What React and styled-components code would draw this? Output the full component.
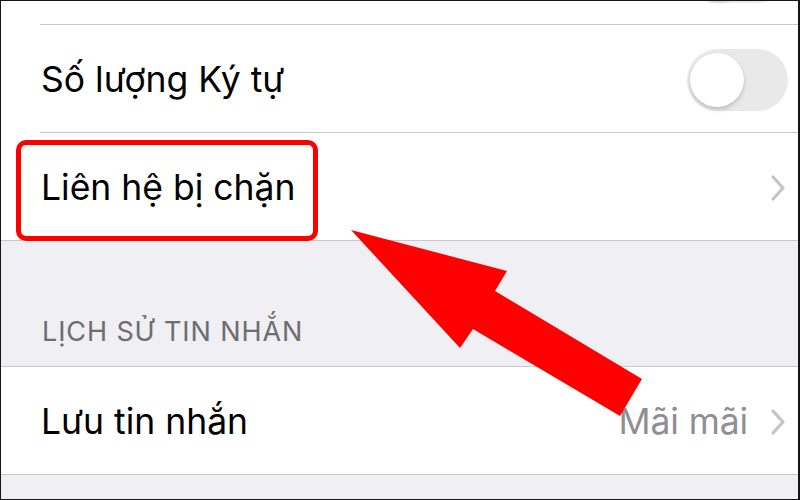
import React from "react";
import styled, { createGlobalStyle } from "styled-components";

const Global = createGlobalStyle`
  html, body { margin: 0; padding: 0; background: #efeff4; }
  body { font-family: Inter, Roboto, "Liberation Sans", sans-serif; }
`;

const Screen = styled.div`
  position: relative;
  width: 800px;
  height: 500px;
  overflow: hidden;
  background: #efeff4;
  &::after {
    content: "";
    position: absolute;
    inset: 0;
    border: 1px solid #151515;
    border-right-width: 2px;
    pointer-events: none;
  }
`;

const Content = styled.div`
  display: flex;
  flex-direction: column;
  margin-top: -83px;
`;

const Group = styled.div`
  display: flex;
  flex-direction: column;
  background: #fff;
  border-top: ${(p) => (p.$top ? "1px solid #c8c7cc" : "none")};
  border-bottom: 1px solid #c8c7cc;
`;

const Row = styled.div`
  position: relative;
  height: 107px;
  display: flex;
  align-items: center;
  padding: 2px 14px 0 41px;
  box-sizing: border-box;
  gap: 14px;
  &:not(:last-child)::after {
    content: "";
    position: absolute;
    left: 40px;
    right: 0;
    bottom: 0;
    height: 1px;
    background: #c8c7cc;
  }
  &:not(:last-child) {
    height: 108px;
  }
`;

const Label = styled.span`
  flex: 1;
  font-size: 35.5px;
  color: #000;
  letter-spacing: 0px;
  line-height: 1;
`;

const Value = styled.span`
  font-size: 35.5px;
  color: #8e8e93;
  letter-spacing: -0.1px;
  line-height: 1;
  margin-right: 8px;
`;

const Toggle = styled.div`
  position: relative;
  width: 101px;
  height: 62px;
  border-radius: 31px;
  background: #e9e9ea;
  margin-right: -2px;
  &::before {
    content: "";
    position: absolute;
    left: 3px;
    top: 4px;
    width: 54px;
    height: 54px;
    border-radius: 50%;
    background: #fff;
    box-shadow: 0 3px 4px rgba(0, 0, 0, 0.16), 0 0 1px rgba(0, 0, 0, 0.12);
  }
`;

const Chevron = () => (
  <svg width="16" height="28" viewBox="0 0 16 28">
    <path d="M3 3 L13 14 L3 25" fill="none" stroke="#c4c4c8" strokeWidth="3.2" strokeLinecap="round" strokeLinejoin="round" />
  </svg>
);

const Spacer = styled.div`
  height: 125px;
  display: flex;
  flex-direction: column;
  justify-content: flex-end;
`;

const Header = styled.div`
  padding: 0 0 19px 42px;
  font-size: 27px;
  line-height: 30px;
  color: #6d6d72;
  text-transform: uppercase;
  letter-spacing: 0.9px;
`;

const Highlight = styled.div`
  position: absolute;
  left: 16px;
  top: 7px;
  width: 302px;
  height: 101px;
  box-sizing: border-box;
  border: 5px solid #ff0000;
  border-radius: 10px;
  pointer-events: none;
`;

const Arrow = styled.svg`
  position: absolute;
  left: 0;
  top: 0;
  pointer-events: none;
`;

export default function App() {
  return (
    <>
      <Global />
      <Screen>
        <Content>
          <Group>
            <Row>
              <Label />
              <Toggle />
            </Row>
            <Row>
              <Label>Số lượng Ký tự</Label>
              <Toggle />
            </Row>
            <Row>
              <Label>Liên hệ bị chặn</Label>
              <Chevron />
              <Highlight />
            </Row>
          </Group>
          <Spacer>
            <Header>Lịch sử tin nhắn</Header>
          </Spacer>
          <Group $top>
            <Row>
              <Label>Lưu tin nhắn</Label>
              <Value>Mãi mãi</Value>
              <Chevron />
            </Row>
          </Group>
        </Content>
        <Arrow width="800" height="500" viewBox="0 0 800 500">
          <polygon points="351,230 507,271 495,291 642,379 620,416 473,329 460,348" fill="#ff0000" />
        </Arrow>
      </Screen>
    </>
  );
}
